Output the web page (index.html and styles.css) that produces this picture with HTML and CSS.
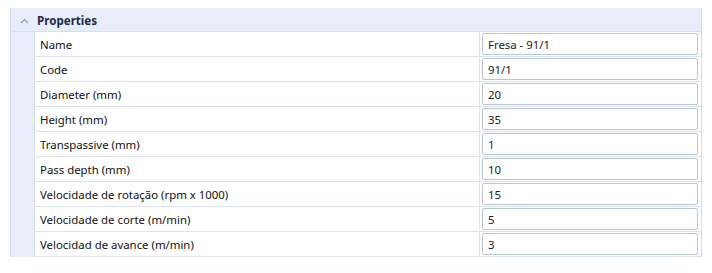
FILE: index.html
```html
<!DOCTYPE html>
<html>
<head>
<meta charset="utf-8">
<link rel="stylesheet" href="styles.css">
</head>
<body>
<div class="panel">
  <div class="header">
    <span class="chev"><svg width="9" height="6" viewBox="0 0 9 6"><path d="M1 5 L4.5 1.5 L8 5" fill="none" stroke="#8b9cb9" stroke-width="1.2"/></svg></span>
    <span class="title">Properties</span>
  </div>
  <div class="body">
    <div class="gutter"></div>
    <div class="grid">
      <div class="row"><div class="label">Name</div><div class="value"><div class="input">Fresa - 91/1</div></div></div>
      <div class="row"><div class="label">Code</div><div class="value"><div class="input">91/1</div></div></div>
      <div class="row"><div class="label">Diameter (mm)</div><div class="value"><div class="input">20</div></div></div>
      <div class="row"><div class="label">Height (mm)</div><div class="value"><div class="input">35</div></div></div>
      <div class="row"><div class="label">Transpassive (mm)</div><div class="value"><div class="input">1</div></div></div>
      <div class="row"><div class="label">Pass depth (mm)</div><div class="value"><div class="input">10</div></div></div>
      <div class="row"><div class="label">Velocidade de rotação (rpm x 1000)</div><div class="value"><div class="input">15</div></div></div>
      <div class="row"><div class="label">Velocidade de corte (m/min)</div><div class="value"><div class="input">5</div></div></div>
      <div class="row"><div class="label">Velocidad de avance (m/min)</div><div class="value"><div class="input">3</div></div></div>
    </div>
  </div>
</div>
</body>
</html>
```
FILE: styles.css
```css
html, body {
  margin: 0;
  padding: 0;
  background: #ffffff;
}
body {
  font-family: "Noto Sans", "Open Sans", sans-serif;
  font-size: 11.4px;
  color: #111;
}
.panel {
  margin: 8px 0 0 10px;
  width: 690px;
  border-left: 1px solid #d3ddeb;
  border-right: 1px solid #d3ddeb;
  background: #e7eef9;
}
.header {
  height: 23px;
  display: flex;
  align-items: center;
  border-bottom: 1px solid #d6dfec;
}
.chev {
  width: 26px;
  display: flex;
  justify-content: center;
  padding-top: 2px;
}
.title {
  font-weight: bold;
  font-size: 11.6px;
  color: #1f2b48;
  padding-top: 2px;
}
.body {
  display: flex;
}
.gutter {
  width: 23px;
  flex: none;
}
.grid {
  flex: 1;
  background: #ffffff;
  border-left: 1px solid #d6dfec;
}
.row {
  display: grid;
  grid-template-columns: 445px 1fr;
  height: 24px;
  border-bottom: 1px solid #dbe3ef;
}
.label {
  padding: 1px 0 0 5px;
  display: flex;
  align-items: center;
  border-right: 1px solid #dbe3ef;
}
.value {
  display: flex;
  align-items: center;
  padding: 0 3px 0 2px;
}
.input {
  flex: 1;
  box-sizing: border-box;
  height: 22px;
  border: 1px solid #b9c6d8;
  border-radius: 2px;
  padding: 1px 0 0 5px;
  display: flex;
  align-items: center;
  color: #1a1a1a;
}
```
